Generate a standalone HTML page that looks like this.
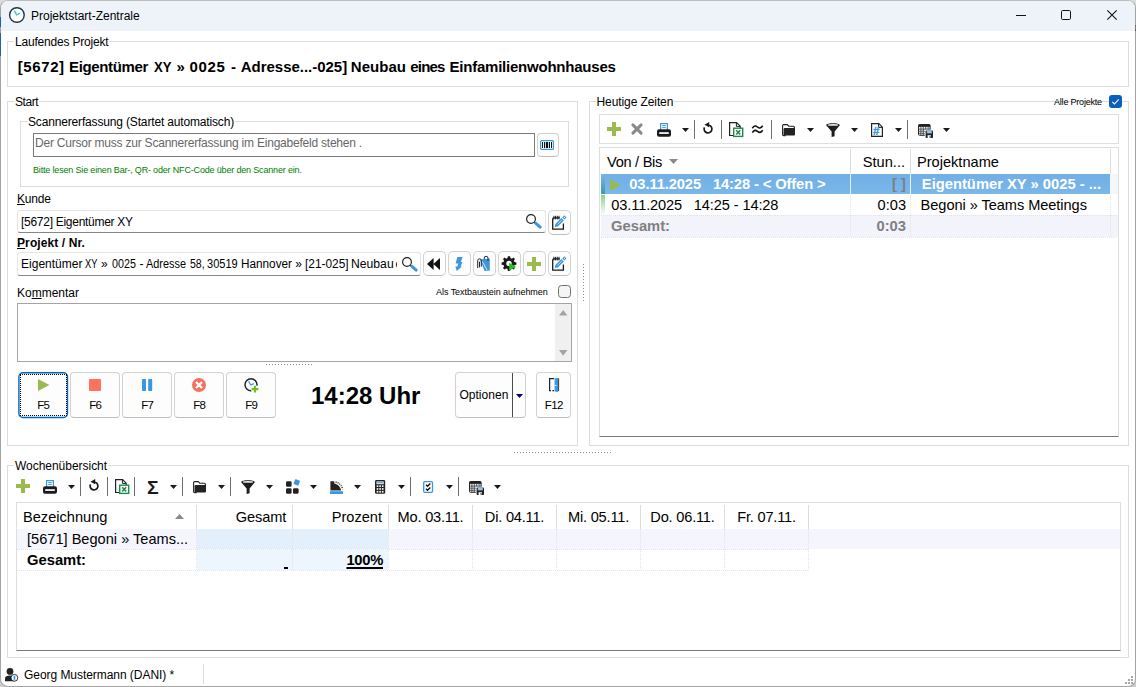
<!DOCTYPE html>
<html lang="de">
<head>
<meta charset="utf-8">
<title>Projektstart-Zentrale</title>
<style>
*{box-sizing:border-box;margin:0;padding:0}
html,body{width:1136px;height:687px;overflow:hidden;background:#fff}
body{position:relative;font-family:"Liberation Sans",sans-serif;font-size:12px;color:#000;line-height:16px}
.a{position:absolute;white-space:pre}
.t{position:absolute;white-space:pre;line-height:16px;font-size:12px;letter-spacing:-0.17px}
.b{font-weight:bold}
.grp{position:absolute;border:1px solid #dcdcdc}
.lbl{position:absolute;background:#fff;padding:0 1px;line-height:16px;white-space:pre;letter-spacing:-0.17px}
.btn{position:absolute;border:1px solid #d2d2d2;border-bottom-color:#bebebe;border-radius:4px;background:#fdfdfd}
.inp{position:absolute;border:1px solid #e5e5e5;border-bottom:1px solid #868686;border-radius:3px;background:#fff}
.g{font-size:14.6px;line-height:20px;position:absolute;white-space:pre}
.r{text-align:right}
.c{text-align:center}
svg{position:absolute;overflow:visible}
u{text-decoration:underline}
.g.b{font-size:14.75px}
.u2{text-decoration:underline;text-decoration-thickness:2px;text-underline-offset:1.5px}
</style>
</head>
<body>
<div class="a" style="left:0;top:0;width:1136px;height:687px;background:linear-gradient(180deg,#dcdcdc 0 9px,#fff 9px 678px,#cdcdcd 678px)"></div>
<div class="a" style="left:0;top:0;width:1136px;height:687px;background:#fff;border:1px solid #a3a3a3;border-top-color:#bdbdbd;border-radius:8px"></div>
<div class="a" style="left:0;top:17px;width:1px;height:39px;background:linear-gradient(180deg,#1c64a6 0 10px,#b09aa8 10px 16px,#1c64a6 16px)"></div>
<div class="a" style="left:1135px;top:25px;width:1px;height:6px;background:linear-gradient(180deg,#3a5fb0,#c07a20,#3a3a90)"></div>
<div class="a" style="left:1px;top:1px;width:1134px;height:30px;background:#eef3fa;border-radius:7px 7px 0 0"></div>
<svg style="left:8px;top:6px" width="18" height="18" viewBox="0 0 18 18"><circle cx="8.9" cy="9" r="7.3" fill="#fff" stroke="#1f3640" stroke-width="1.4"/><path d="M6.4 4.6L8.6 8.9L12.2 7.2" fill="none" stroke="#4fc0c0" stroke-width="1.4"/></svg>
<div class="t" style="left:31px;top:8px;letter-spacing:0">Projektstart-Zentrale</div>
<svg style="left:1016px;top:10px" width="11" height="11" viewBox="0 0 11 11"><path d="M0 5.5H10" stroke="#111" stroke-width="1"/></svg>
<svg style="left:1061px;top:10px" width="11" height="11" viewBox="0 0 11 11"><rect x="0.5" y="0.5" width="9" height="9" rx="1.2" fill="none" stroke="#111" stroke-width="1"/></svg>
<svg style="left:1107px;top:10px" width="11" height="11" viewBox="0 0 11 11"><path d="M0.3 0.3L9.7 9.7M9.7 0.3L0.3 9.7" stroke="#111" stroke-width="1.1"/></svg>
<div class="grp" style="left:7px;top:41px;width:1122px;height:46px"></div>
<div class="lbl" style="left:14px;top:34px;letter-spacing:-0.2px">Laufendes Projekt</div>
<div class="a b" style="left:0;top:57px;font-size:15px;line-height:20px"><span class="a" style="left:17.75px;top:0;letter-spacing:0.6px">[5672] </span><span class="a" style="left:69px;top:0;letter-spacing:-0.36px">Eigentümer </span><span class="a" style="left:153.75px;top:0;transform:scaleX(0.875);transform-origin:0 0">XY </span><span class="a" style="left:176.5px;top:0;">» </span><span class="a" style="left:189.5px;top:0;letter-spacing:0.667px">0025 </span><span class="a" style="left:231px;top:0;">- </span><span class="a" style="left:240.75px;top:0;letter-spacing:-0.02px">Adresse...-025] </span><span class="a" style="left:350.75px;top:0;letter-spacing:0.05px">Neubau </span><span class="a" style="left:410.25px;top:0;letter-spacing:-0.81px">eines </span><span class="a" style="left:449.5px;top:0;letter-spacing:-0.225px">Einfamilienwohnhauses</span></div>
<div class="grp" style="left:7px;top:101px;width:571px;height:345px"></div>
<div class="lbl" style="left:14px;top:94px;letter-spacing:-0.42px">Start</div>
<div class="grp" style="left:20px;top:121px;width:549px;height:66px"></div>
<div class="lbl" style="left:27px;top:114px;letter-spacing:-0.16px">Scannererfassung (Startet automatisch)</div>
<div class="a" style="left:33px;top:133px;width:502px;height:24px;border:1px solid #7a7a7a;background:#fff"></div>
<div class="t" style="left:35px;top:134.6px;color:#676767;letter-spacing:-0.22px">Der Cursor muss zur Scannererfassung im Eingabefeld stehen .</div>
<div class="btn" style="left:537px;top:133px;width:22px;height:24px"></div>
<svg style="left:540px;top:140px" width="14" height="10" viewBox="0 0 14 10"><rect x="0.6" y="0.6" width="12.8" height="8.8" rx="1" fill="#fff" stroke="#3a96dd" stroke-width="1.2"/><path d="M2 2h1v6h-1zM4 2h1v6h-1zM5.8 2h2.4v6h-2.4zM9 2h1v6h-1zM11 2h1v6h-1z" fill="#111"/></svg>
<div class="t" style="left:33px;top:162px;font-size:9px;color:#008000;letter-spacing:-0.17px">Bitte lesen Sie einen Bar-, QR- oder NFC-Code über den Scanner ein.</div>
<div class="t" style="left:17px;top:191px;letter-spacing:-0.19px"><u>K</u>unde</div>
<div class="inp" style="left:17px;top:210px;width:529px;height:23px"></div>
<div class="t" style="left:21px;top:214px;letter-spacing:-0.28px">[5672] Eigentümer XY</div>
<svg style="left:525.3px;top:213.2px" width="17" height="17" viewBox="0 0 17 17"><circle cx="6" cy="6" r="4.4" fill="none" stroke="#222" stroke-width="1.2"/><path d="M9.2 9.2L11 10.8" stroke="#222" stroke-width="1.4"/><path d="M10.9 10.3L15.2 14.1" stroke="#3a96dd" stroke-width="3" stroke-linecap="round"/></svg>
<div class="btn" style="left:548px;top:210px;width:23px;height:25px;border-radius:5px"></div>
<svg style="left:552px;top:215px" width="15" height="15" viewBox="0 0 15 15"><path d="M7.6 2.9H1.9a1.2 1.2 0 0 0-1.2 1.2V14.1H11.4V8.6" fill="none" stroke="#1a1a1a" stroke-width="1.3"/><path d="M1.9 0.8v3.6M3.6 0.8v3.6M5.3 0.8v3.6M7 0.8v3.6" stroke="#1a1a1a" stroke-width="1"/><path d="M2.7 12.1L3.4 9L9.4 3L11.8 5.4L5.8 11.4z" fill="#3a96dd"/><path d="M10.24 2.44L12.34 0.34L14.46 2.46L12.36 4.56z" fill="#3a96dd"/><path d="M5.6 9.2L9.8 5" stroke="#fff" stroke-width="0.7"/><circle cx="12.4" cy="2.4" r="0.55" fill="#fff"/></svg>
<div class="t b" style="left:17px;top:235px;letter-spacing:0.1px"><u>P</u>rojekt / Nr.</div>
<div class="inp" style="left:17px;top:252px;width:404px;height:24px"></div>
<div class="t" style="left:0;top:255.5px;width:397.2px;height:16px;overflow:hidden;letter-spacing:0"><span class="a" style="left:20.75px;top:0;transform:scaleX(1.002);transform-origin:0 0">Eigentümer </span><span class="a" style="left:85.0px;top:0;transform:scaleX(0.775);transform-origin:0 0">XY </span><span class="a" style="left:101.1px;top:0;transform:scaleX(1.0);transform-origin:0 0">» </span><span class="a" style="left:111.75px;top:0;transform:scaleX(0.894);transform-origin:0 0">0025 </span><span class="a" style="left:139.4px;top:0;transform:scaleX(1.0);transform-origin:0 0">- </span><span class="a" style="left:146.25px;top:0;transform:scaleX(0.909);transform-origin:0 0">Adresse </span><span class="a" style="left:189.73px;top:0;transform:scaleX(0.873);transform-origin:0 0">58, </span><span class="a" style="left:207.18px;top:0;transform:scaleX(0.919);transform-origin:0 0">30519 </span><span class="a" style="left:241.12px;top:0;transform:scaleX(0.98);transform-origin:0 0">Hannover </span><span class="a" style="left:295.25px;top:0;transform:scaleX(1.0);transform-origin:0 0">» </span><span class="a" style="left:304.91px;top:0;transform:scaleX(0.99);transform-origin:0 0">[21-025] </span><span class="a" style="left:350.88px;top:0;transform:scaleX(1.015);transform-origin:0 0">Neubau </span><span class="a" style="left:395.5px;top:0;transform:scaleX(1.0);transform-origin:0 0">eines </span></div>
<svg style="left:400.6px;top:255.7px" width="17" height="17" viewBox="0 0 17 17"><circle cx="6" cy="6" r="4.4" fill="none" stroke="#222" stroke-width="1.2"/><path d="M9.2 9.2L11 10.8" stroke="#222" stroke-width="1.4"/><path d="M10.9 10.3L15.2 14.1" stroke="#3a96dd" stroke-width="3" stroke-linecap="round"/></svg>
<div class="btn" style="left:423px;top:251px;width:23px;height:25px;border-radius:5px"></div>
<div class="btn" style="left:448px;top:251px;width:23px;height:25px;border-radius:5px"></div>
<div class="btn" style="left:473px;top:251px;width:23px;height:25px;border-radius:5px"></div>
<div class="btn" style="left:498px;top:251px;width:23px;height:25px;border-radius:5px"></div>
<div class="btn" style="left:523px;top:251px;width:23px;height:25px;border-radius:5px"></div>
<div class="btn" style="left:548px;top:251px;width:23px;height:25px;border-radius:5px"></div>
<svg style="left:427px;top:258px" width="13" height="12" viewBox="0 0 13 12"><path d="M6.6 0v12L0 6zM13 0v12L6.4 6z" fill="#111"/></svg>
<svg style="left:454.5px;top:257px" width="8" height="14" viewBox="0 0 8 14"><path d="M2.4 0H7.6L5.8 5H7.4L5.6 9.4H7L1.7 14L0.4 9.4H2.4L3.3 6.6H0.6z" fill="#3a96dd"/></svg>
<svg style="left:477px;top:256px" width="14" height="15" viewBox="0 0 14 15"><path d="M3 3.6L12.8 2.4V14.4L7.6 15z" fill="#3a96dd"/><path d="M5.2 5.4l4.8 8.6" stroke="#e8f2fb" stroke-width="0.9"/><path d="M0.7 12V4.6a1.8 1.8 0 0 1 3.6 0V10.6M2.5 11.4V5.6" fill="none" stroke="#222" stroke-width="1"/><path d="M7.2 3.4V2.2a1.9 1.9 0 0 1 3.8 0V5" fill="none" stroke="#222" stroke-width="1"/></svg>
<svg style="left:502px;top:256px" width="15" height="15" viewBox="0 0 15 15"><path d="M5.9 0.2h2.2l0.4 1.9l1.3 0.6l1.7-1.1l1.5 1.5l-1.1 1.7l0.6 1.3l1.9 0.4v2.2l-1.9 0.4l-0.6 1.3l1.1 1.7l-1.5 1.5l-1.7-1.1l-1.3 0.6l-0.4 1.9h-2.2l-0.4-1.9l-1.3-0.6l-1.7 1.1l-1.5-1.5l1.1-1.7l-0.6-1.3l-1.9-0.4v-2.2l1.9-0.4l0.6-1.3l-1.1-1.7l1.5-1.5l1.7 1.1l1.3-0.6z" fill="#1a1a1a"/><circle cx="7" cy="7.4" r="2.7" fill="#fdfdfd"/><path d="M7.2 6.8v8l6.9-4z" fill="#22c422"/></svg>
<svg style="left:527px;top:257px" width="14" height="14" viewBox="0 0 14 14"><path d="M5 0h4v5h5v4h-5v5h-4v-5h-5v-4h5z" fill="#9aba50"/></svg>
<svg style="left:552px;top:256px" width="15" height="15" viewBox="0 0 15 15"><path d="M7.6 2.9H1.9a1.2 1.2 0 0 0-1.2 1.2V14.1H11.4V8.6" fill="none" stroke="#1a1a1a" stroke-width="1.3"/><path d="M1.9 0.8v3.6M3.6 0.8v3.6M5.3 0.8v3.6M7 0.8v3.6" stroke="#1a1a1a" stroke-width="1"/><path d="M2.7 12.1L3.4 9L9.4 3L11.8 5.4L5.8 11.4z" fill="#3a96dd"/><path d="M10.24 2.44L12.34 0.34L14.46 2.46L12.36 4.56z" fill="#3a96dd"/><path d="M5.6 9.2L9.8 5" stroke="#fff" stroke-width="0.7"/><circle cx="12.4" cy="2.4" r="0.55" fill="#fff"/></svg>
<div class="t" style="left:17px;top:285px;letter-spacing:0">Ko<u>m</u>mentar</div>
<div class="t" style="left:436px;top:283.5px;font-size:9px;letter-spacing:-0.045px">Als Textbaustein aufnehmen</div>
<div class="a" style="left:558px;top:285px;width:13px;height:13px;border:1px solid #707070;border-radius:3.5px;background:#f5f5f5"></div>
<div class="a" style="left:17px;top:303px;width:555px;height:59px;border:1px solid #a4a4a8;background:#fff"></div>
<div class="a" style="left:555px;top:304px;width:16px;height:57px;background:#f0f0f0"></div>
<svg style="left:559px;top:310px" width="8.4" height="5.6" viewBox="0 0 8.4 5.6"><path d="M4.2 0L8.4 5.6H0z" fill="#a3a3a3"/></svg>
<svg style="left:559px;top:350.2px" width="8.4" height="5.8" viewBox="0 0 8.4 5.8"><path d="M0 0H8.4L4.2 5.8z" fill="#a3a3a3"/></svg>
<div class="a" style="left:266px;top:364px;width:46px;height:1px;background:repeating-linear-gradient(90deg,#8c8c8c 0 1px,transparent 1px 3px)"></div>
<div class="a" style="left:583px;top:264px;width:1px;height:37px;background:repeating-linear-gradient(180deg,#8c8c8c 0 1px,transparent 1px 3px)"></div>
<div class="a" style="left:514px;top:452px;width:97px;height:1px;background:repeating-linear-gradient(90deg,#8c8c8c 0 1px,transparent 1px 3px)"></div>
<svg style="left:18px;top:372px" width="50" height="46" viewBox="0 0 50 46"><rect x="0.9" y="0.7" width="48.6" height="44.8" rx="4" fill="#fdfdfd" stroke="#0067c0" stroke-width="1.4"/></svg>
<div class="t c" style="left:18px;top:397px;width:50.6px;font-size:11.5px;letter-spacing:-0.6px">F5</div>
<div class="btn" style="left:70px;top:372px;width:50px;height:46px"></div>
<div class="t c" style="left:70px;top:397px;width:50.6px;font-size:11.5px;letter-spacing:-0.6px">F6</div>
<div class="btn" style="left:122px;top:372px;width:50px;height:46px"></div>
<div class="t c" style="left:122px;top:397px;width:50.6px;font-size:11.5px;letter-spacing:-0.6px">F7</div>
<div class="btn" style="left:174px;top:372px;width:50px;height:46px"></div>
<div class="t c" style="left:174px;top:397px;width:50.6px;font-size:11.5px;letter-spacing:-0.6px">F8</div>
<div class="btn" style="left:226px;top:372px;width:50px;height:46px"></div>
<div class="t c" style="left:226px;top:397px;width:50.6px;font-size:11.5px;letter-spacing:-0.6px">F9</div>
<div class="a" style="left:20px;top:374px;width:47px;height:42px;border:1px dotted #000"></div>
<svg style="left:38px;top:379px" width="12" height="12" viewBox="0 0 12 12"><path d="M0 0L11.5 6L0 12z" fill="#9aba50"/></svg>
<svg style="left:89px;top:379px" width="12" height="12" viewBox="0 0 12 12"><rect width="12" height="12" rx="0.8" fill="#ff725c"/></svg>
<svg style="left:142px;top:379px" width="11" height="12" viewBox="0 0 11 12"><rect x="0" width="4" height="12" rx="0.8" fill="#3a96dd"/><rect x="6.2" width="4" height="12" rx="0.8" fill="#3a96dd"/></svg>
<svg style="left:192px;top:378px" width="14" height="14" viewBox="0 0 14 14"><circle cx="7" cy="7" r="7" fill="#f4705f"/><path d="M4 4l6 6M10 4l-6 6" stroke="#fff" stroke-width="2.2"/></svg>
<svg style="left:244px;top:378px" width="15" height="15" viewBox="0 0 15 15"><circle cx="7" cy="6.8" r="6" fill="#fff" stroke="#222" stroke-width="1.5"/><path d="M4.6 3.4L6.8 7L9.8 5.6" fill="none" stroke="#3a96dd" stroke-width="1.2"/><circle cx="11" cy="11.2" r="4" fill="#fff"/><path d="M9.9 7.8h2.2v2.3h2.3v2.2h-2.3v2.3h-2.2v-2.3h-2.3v-2.2h2.3z" fill="#6cc024"/></svg>
<div class="a b" style="left:311px;top:380px;font-size:24px;line-height:32px">14:28 Uhr</div>
<div class="btn" style="left:455px;top:372px;width:71px;height:46px"></div>
<div class="a" style="left:512px;top:373px;width:1px;height:44px;background:#4c4c4c"></div>
<svg style="left:516px;top:393.5px" width="7" height="4" viewBox="0 0 7 4"><path d="M0 0h7l-3.5 4z" fill="#00007a"/></svg>
<div class="t" style="left:459.4px;top:387px;letter-spacing:0.04px">Optionen</div>
<div class="btn" style="left:536px;top:372px;width:35px;height:46px"></div>
<div class="t c" style="left:536px;top:397px;width:35.6px;font-size:11.5px;letter-spacing:-0.6px">F12</div>
<svg style="left:549px;top:378px" width="10" height="14" viewBox="0 0 10 14"><path d="M5 0.6H0.6V12.6H2M3.4 12.6H5" fill="none" stroke="#222" stroke-width="1.2"/><path d="M5.6 0.2L9.2 0V14L5.6 13.4z" fill="#3a96dd"/><path d="M9.6 0.4V13" stroke="#222" stroke-width="0.9"/><circle cx="6.8" cy="7.4" r="0.7" fill="#fff"/></svg>
<div class="grp" style="left:589px;top:101px;width:540px;height:345px"></div>
<div class="lbl" style="left:595.5px;top:94px;letter-spacing:-0.09px">Heutige Zeiten</div>
<div class="t" style="left:1054px;top:93.5px;font-size:9px;letter-spacing:-0.2px">Alle Projekte</div>
<svg style="left:1109px;top:95px" width="13" height="13" viewBox="0 0 13 13"><rect width="13" height="13" rx="3" fill="#0a5fbd"/><path d="M3.3 6.8l2.2 2.2l4.2-4.6" fill="none" stroke="#fff" stroke-width="1.1"/></svg>
<div class="a" style="left:599px;top:114px;width:520px;height:30px;border:1px solid #dedede;background:#fff"></div>
<svg style="left:607px;top:122px" width="14" height="14" viewBox="0 0 14 14"><path d="M5 0h4v5h5v4h-5v5h-4v-5h-5v-4h5z" fill="#9aba50"/></svg>
<svg style="left:631px;top:123px" width="12" height="12" viewBox="0 0 12 12"><path d="M1.9 1.9L10.1 10.1M10.1 1.9L1.9 10.1" stroke="#8a8a8a" stroke-width="3" stroke-linecap="round"/></svg>
<svg style="left:657px;top:122.6px" width="14" height="14" viewBox="0 0 14 14"><rect x="3.6" y="0.6" width="6.8" height="7" fill="#fff" stroke="#3a96dd" stroke-width="1.2"/><path d="M5.2 2.6h3.6M5.2 4.6h3.6" stroke="#3a96dd" stroke-width="1"/><rect x="0" y="6.2" width="14" height="7.6" rx="2" fill="#1c1c1c"/><rect x="2.2" y="9.2" width="9.6" height="1.7" fill="#fff"/></svg>
<svg style="left:682px;top:128px" width="7" height="4" viewBox="0 0 7 4"><path d="M0 0h7l-3.5 4z" fill="#1a1a1a"/></svg>
<div class="a" style="left:694px;top:120px;width:1px;height:19px;background:#6e6e6e"></div>
<svg style="left:700.75px;top:121.25px" width="14" height="15" viewBox="0 0 14 15"><path d="M8 4.23A3.9 3.9 0 1 1 3.5 6.3" fill="none" stroke="#1a1a1a" stroke-width="1.7"/><path d="M8.2 0.9L3.5 3.7L8.2 6.3z" fill="#1a1a1a"/></svg>
<div class="a" style="left:721px;top:120px;width:1px;height:19px;background:#6e6e6e"></div>
<svg style="left:729px;top:122px" width="15" height="15" viewBox="0 0 15 15"><path d="M0.6 0.6h7l3.6 3.6v9.3h-10.6z" fill="#fff" stroke="#222" stroke-width="1.2"/><path d="M7.4 0.8v3.6h3.6" fill="none" stroke="#222" stroke-width="1"/><rect x="4.7" y="6.2" width="9" height="8.2" fill="#fff" stroke="#1f8a4c" stroke-width="1.4"/><path d="M7.2 8.3l4 4.2M11.2 8.3l-4 4.2" stroke="#1f8a4c" stroke-width="1.6"/></svg>
<svg style="left:752px;top:124.5px" width="11" height="9" viewBox="0 0 11 9"><path d="M0.3 3.2C2.3 0.2 3.8 0.6 5.5 2S8.8 3.6 10.7 0.8M0.3 7.6C2.3 4.6 3.8 5 5.5 6.4S8.8 8 10.7 5.2" fill="none" stroke="#111" stroke-width="1.6"/></svg>
<div class="a" style="left:771px;top:120px;width:1px;height:19px;background:#6e6e6e"></div>
<svg style="left:782px;top:124px" width="13" height="12" viewBox="0 0 13 12"><path d="M0.6 9.5V1.6a1 1 0 0 1 1-1h3.6l1.6 1.6h4.6a1 1 0 0 1 1 1V5" fill="#fff" stroke="#222" stroke-width="1.1"/><rect x="1.6" y="4" width="11.4" height="7.6" rx="1" fill="#222"/><path d="M0.6 9v1.6a1 1 0 0 0 1 1h2" fill="none" stroke="#222" stroke-width="1.1"/></svg>
<svg style="left:807px;top:128px" width="7" height="4" viewBox="0 0 7 4"><path d="M0 0h7l-3.5 4z" fill="#1a1a1a"/></svg>
<svg style="left:826px;top:123px" width="14" height="14" viewBox="0 0 14 14"><path d="M0.2 2.2C0.2 -0.4 13.8 -0.4 13.8 2.2L8.6 8.4V13.2L5.6 14V8.4z" fill="#1e1e1e"/><ellipse cx="7" cy="1.9" rx="5.2" ry="0.9" fill="#e8e8e8"/></svg>
<svg style="left:851px;top:128px" width="7" height="4" viewBox="0 0 7 4"><path d="M0 0h7l-3.5 4z" fill="#1a1a1a"/></svg>
<svg style="left:871px;top:123px" width="12" height="14" viewBox="0 0 12 14"><path d="M0.6 0.6h7.2l3.6 3.6v9.2h-10.8z" fill="#fff" stroke="#222" stroke-width="1.2"/><path d="M7.6 0.8v3.6h3.6" fill="none" stroke="#222" stroke-width="1"/><text x="1.9" y="12" font-family="Liberation Sans, sans-serif" font-size="11.5" font-weight="bold" fill="#3a96dd" stroke="#3a96dd" stroke-width="0.4">#</text></svg>
<svg style="left:895px;top:128px" width="7" height="4" viewBox="0 0 7 4"><path d="M0 0h7l-3.5 4z" fill="#1a1a1a"/></svg>
<div class="a" style="left:907px;top:120px;width:1px;height:19px;background:#6e6e6e"></div>
<svg style="left:918px;top:124px" width="15" height="14" viewBox="0 0 15 14"><rect x="0.5" y="0.5" width="11.6" height="10.8" rx="1" fill="#f4f4f4" stroke="#222" stroke-width="1"/><rect x="0.5" y="0.5" width="11.6" height="2.4" fill="#222"/><path d="M2.9 2.6v8.4" stroke="#3a3a3a" stroke-width="0.8"/><path d="M5.3 2.6v8.4" stroke="#3a3a3a" stroke-width="0.8"/><path d="M7.699999999999999 2.6v8.4" stroke="#3a3a3a" stroke-width="0.8"/><path d="M10.1 2.6v8.4" stroke="#3a3a3a" stroke-width="0.8"/><path d="M0.5 5.1h11.4" stroke="#3a3a3a" stroke-width="0.8"/><path d="M0.5 7.2h11.4" stroke="#3a3a3a" stroke-width="0.8"/><path d="M0.5 9.3h11.4" stroke="#3a3a3a" stroke-width="0.8"/><rect x="6.8" y="5.8" width="8.2" height="8.2" fill="#fff"/><rect x="7.6" y="6.4" width="7.4" height="7.6" rx="0.8" fill="#222"/><rect x="8.8" y="6.4" width="5" height="3" fill="#8cc4f0"/><rect x="9.6" y="11.2" width="3.4" height="2.8" fill="#fff"/><rect x="11.6" y="11.8" width="1" height="2.2" fill="#222"/></svg>
<svg style="left:943px;top:128px" width="7" height="4" viewBox="0 0 7 4"><path d="M0 0h7l-3.5 4z" fill="#1a1a1a"/></svg>
<div class="a" style="left:599px;top:147px;width:520px;height:290px;border:1px solid #dedede;border-bottom-color:#7a7a7a;background:#fff"></div>
<div class="a" style="left:850px;top:149px;width:1px;height:25px;background:#dcdcdc"></div>
<div class="a" style="left:910px;top:149px;width:1px;height:25px;background:#dcdcdc"></div>
<div class="a" style="left:1110px;top:149px;width:1px;height:25px;background:#dcdcdc"></div>
<div class="g" style="left:607px;top:152px;letter-spacing:-0.28px">Von / Bis</div>
<svg style="left:669px;top:159px" width="9" height="5" viewBox="0 0 9 5"><path d="M0 0h9l-4.5 5z" fill="#8a8a8a"/></svg>
<div class="g r" style="left:851px;top:152px;width:54px">Stun...</div>
<div class="g" style="left:917px;top:152px">Projektname</div>
<div class="a" style="left:601px;top:174px;width:509px;height:20px;background:linear-gradient(#70afe6,#7bb7e8)"></div>
<div class="a" style="left:601px;top:174px;width:4px;height:20px;background:linear-gradient(#7db6de,#3f9aa6)"></div>
<div class="a" style="left:850px;top:174px;width:1px;height:20px;background:#e8f1fa"></div>
<div class="a" style="left:910px;top:174px;width:1px;height:20px;background:#e8f1fa"></div>
<svg style="left:610px;top:179px" width="11" height="12" viewBox="0 0 11 12"><path d="M0 0L11 6L0 12z" fill="#9aba50"/></svg>
<div class="g b" style="left:629.3px;top:174px;color:#fff;letter-spacing:-0.13px">03.11.2025   14:28 - &lt; Offen &gt;</div>
<div class="g b r" style="left:851px;top:174px;width:55px;color:#7f7f7f">[ ]</div>
<div class="g b" style="left:921.8px;top:174px;color:#fff">Eigentümer XY » 0025 - ...</div>
<div class="a" style="left:601px;top:195px;width:4px;height:20px;background:linear-gradient(#86d586,#fff)"></div>
<div class="g" style="left:611.3px;top:195px;letter-spacing:-0.12px">03.11.2025   14:25 - 14:28</div>
<div class="g r" style="left:851px;top:195px;width:55px">0:03</div>
<div class="g" style="left:920.6px;top:195px;letter-spacing:-0.06px">Begoni » Teams Meetings</div>
<div class="a" style="left:601px;top:215px;width:517px;height:22px;background:#f3f3fb"></div>
<div class="g b" style="left:611px;top:216px;color:#7f7f7f">Gesamt:</div>
<div class="g b r" style="left:851px;top:216px;width:55px;color:#7f7f7f">0:03</div>
<div class="a" style="left:850px;top:195px;width:1px;height:42px;background:repeating-linear-gradient(180deg,#e2e2ea 0 1px,transparent 1px 2px)"></div>
<div class="a" style="left:910px;top:195px;width:1px;height:42px;background:repeating-linear-gradient(180deg,#e2e2ea 0 1px,transparent 1px 2px)"></div>
<div class="a" style="left:1110px;top:195px;width:1px;height:42px;background:repeating-linear-gradient(180deg,#e2e2ea 0 1px,transparent 1px 2px)"></div>
<div class="a" style="left:601px;top:215px;width:516px;height:1px;background:repeating-linear-gradient(90deg,#e2e2ea 0 1px,transparent 1px 2px)"></div>
<div class="a" style="left:601px;top:237px;width:516px;height:1px;background:repeating-linear-gradient(90deg,#e2e2ea 0 1px,transparent 1px 2px)"></div>
<div class="a" style="left:1110px;top:174px;width:8px;height:20px;background:#f5f5fc"></div>
<div class="grp" style="left:7px;top:465px;width:1122px;height:193px"></div>
<div class="lbl" style="left:14px;top:458px;letter-spacing:-0.03px">Wochenübersicht</div>
<svg style="left:16px;top:479px" width="14" height="14" viewBox="0 0 14 14"><path d="M5 0h4v5h5v4h-5v5h-4v-5h-5v-4h5z" fill="#9aba50"/></svg>
<svg style="left:43px;top:479.5px" width="14" height="14" viewBox="0 0 14 14"><rect x="3.6" y="0.6" width="6.8" height="7" fill="#fff" stroke="#3a96dd" stroke-width="1.2"/><path d="M5.2 2.6h3.6M5.2 4.6h3.6" stroke="#3a96dd" stroke-width="1"/><rect x="0" y="6.2" width="14" height="7.6" rx="2" fill="#1c1c1c"/><rect x="2.2" y="9.2" width="9.6" height="1.7" fill="#fff"/></svg>
<svg style="left:68px;top:485px" width="7" height="4" viewBox="0 0 7 4"><path d="M0 0h7l-3.5 4z" fill="#1a1a1a"/></svg>
<div class="a" style="left:80px;top:477px;width:1px;height:19px;background:#6e6e6e"></div>
<svg style="left:86.9px;top:478.2px" width="14" height="15" viewBox="0 0 14 15"><path d="M8 4.23A3.9 3.9 0 1 1 3.5 6.3" fill="none" stroke="#1a1a1a" stroke-width="1.7"/><path d="M8.2 0.9L3.5 3.7L8.2 6.3z" fill="#1a1a1a"/></svg>
<div class="a" style="left:107px;top:477px;width:1px;height:19px;background:#6e6e6e"></div>
<svg style="left:115px;top:479px" width="15" height="15" viewBox="0 0 15 15"><path d="M0.6 0.6h7l3.6 3.6v9.3h-10.6z" fill="#fff" stroke="#222" stroke-width="1.2"/><path d="M7.4 0.8v3.6h3.6" fill="none" stroke="#222" stroke-width="1"/><rect x="4.7" y="6.2" width="9" height="8.2" fill="#fff" stroke="#1f8a4c" stroke-width="1.4"/><path d="M7.2 8.3l4 4.2M11.2 8.3l-4 4.2" stroke="#1f8a4c" stroke-width="1.6"/></svg>
<div class="a" style="left:134px;top:477px;width:1px;height:19px;background:#6e6e6e"></div>
<div class="a b" style="left:147px;top:478.6px;font-size:18px;line-height:18px;color:#1a1a1a;transform:scaleX(1.08);transform-origin:0 0">Σ</div>
<svg style="left:170px;top:485px" width="7" height="4" viewBox="0 0 7 4"><path d="M0 0h7l-3.5 4z" fill="#1a1a1a"/></svg>
<div class="a" style="left:182px;top:477px;width:1px;height:19px;background:#6e6e6e"></div>
<svg style="left:193px;top:481px" width="13" height="12" viewBox="0 0 13 12"><path d="M0.6 9.5V1.6a1 1 0 0 1 1-1h3.6l1.6 1.6h4.6a1 1 0 0 1 1 1V5" fill="#fff" stroke="#222" stroke-width="1.1"/><rect x="1.6" y="4" width="11.4" height="7.6" rx="1" fill="#222"/><path d="M0.6 9v1.6a1 1 0 0 0 1 1h2" fill="none" stroke="#222" stroke-width="1.1"/></svg>
<svg style="left:218px;top:485px" width="7" height="4" viewBox="0 0 7 4"><path d="M0 0h7l-3.5 4z" fill="#1a1a1a"/></svg>
<div class="a" style="left:230px;top:477px;width:1px;height:19px;background:#6e6e6e"></div>
<svg style="left:241px;top:480px" width="14" height="14" viewBox="0 0 14 14"><path d="M0.2 2.2C0.2 -0.4 13.8 -0.4 13.8 2.2L8.6 8.4V13.2L5.6 14V8.4z" fill="#1e1e1e"/><ellipse cx="7" cy="1.9" rx="5.2" ry="0.9" fill="#e8e8e8"/></svg>
<svg style="left:266px;top:485px" width="7" height="4" viewBox="0 0 7 4"><path d="M0 0h7l-3.5 4z" fill="#1a1a1a"/></svg>
<svg style="left:286px;top:479px" width="14" height="15" viewBox="0 0 14 15"><rect x="0" y="2.2" width="5.6" height="5.6" rx="1.3" fill="#222"/><rect x="0" y="9.2" width="5.6" height="5.6" rx="1.3" fill="#222"/><rect x="7" y="9.2" width="5.6" height="5.6" rx="1.3" fill="#222"/><rect x="8.2" y="0.8" width="5.2" height="5.2" rx="0.8" fill="#3a96dd" transform="rotate(20 10.8 3.4)"/></svg>
<svg style="left:310px;top:485px" width="7" height="4" viewBox="0 0 7 4"><path d="M0 0h7l-3.5 4z" fill="#1a1a1a"/></svg>
<svg style="left:330px;top:481px" width="13" height="13" viewBox="0 0 13 13"><path d="M0.4 9.6V0.2H4.3V2.4C7.2 2.8 10.2 5 11.2 9.6z" fill="#222"/><path d="M5.6 1C9 1.6 12 4.6 12.6 8.4" fill="none" stroke="#222" stroke-width="1.3" stroke-dasharray="1.1 1"/><rect x="0" y="10.2" width="13" height="2.8" fill="#3a96dd"/></svg>
<svg style="left:354px;top:485px" width="7" height="4" viewBox="0 0 7 4"><path d="M0 0h7l-3.5 4z" fill="#1a1a1a"/></svg>
<svg style="left:375px;top:480px" width="10" height="14" viewBox="0 0 10 14"><rect x="0" y="0" width="10.2" height="13.8" rx="1.4" fill="#222"/><rect x="1.5" y="1.4" width="7.2" height="2.8" fill="#fff"/><rect x="2.2" y="2.2" width="5.8" height="1.1" fill="#3a96dd"/><rect x="1.7" y="5.3" width="1.6" height="1.7" fill="#fff"/><rect x="1.7" y="8.1" width="1.6" height="1.7" fill="#fff"/><rect x="1.7" y="10.899999999999999" width="1.6" height="1.7" fill="#fff"/><rect x="4.3" y="5.3" width="1.6" height="1.7" fill="#fff"/><rect x="4.3" y="8.1" width="1.6" height="1.7" fill="#fff"/><rect x="4.3" y="10.899999999999999" width="1.6" height="1.7" fill="#fff"/><rect x="6.9" y="5.3" width="1.6" height="1.7" fill="#fff"/><rect x="6.9" y="8.1" width="1.6" height="1.7" fill="#fff"/><rect x="6.9" y="10.899999999999999" width="1.6" height="1.7" fill="#fff"/></svg>
<svg style="left:398px;top:485px" width="7" height="4" viewBox="0 0 7 4"><path d="M0 0h7l-3.5 4z" fill="#1a1a1a"/></svg>
<div class="a" style="left:410px;top:477px;width:1px;height:19px;background:#6e6e6e"></div>
<svg style="left:423px;top:481px" width="10" height="12" viewBox="0 0 10 12"><rect x="0.7" y="0.7" width="8.8" height="10.6" rx="1" fill="#fff" stroke="#3a96dd" stroke-width="1.3"/><path d="M3 3.8l1.5 1.5l2.8-2.9M3 7.8l1.5 1.5l2.8-2.9" fill="none" stroke="#111" stroke-width="1.4"/></svg>
<svg style="left:446px;top:485px" width="7" height="4" viewBox="0 0 7 4"><path d="M0 0h7l-3.5 4z" fill="#1a1a1a"/></svg>
<div class="a" style="left:458px;top:477px;width:1px;height:19px;background:#6e6e6e"></div>
<svg style="left:469px;top:481px" width="15" height="14" viewBox="0 0 15 14"><rect x="0.5" y="0.5" width="11.6" height="10.8" rx="1" fill="#f4f4f4" stroke="#222" stroke-width="1"/><rect x="0.5" y="0.5" width="11.6" height="2.4" fill="#222"/><path d="M2.9 2.6v8.4" stroke="#3a3a3a" stroke-width="0.8"/><path d="M5.3 2.6v8.4" stroke="#3a3a3a" stroke-width="0.8"/><path d="M7.699999999999999 2.6v8.4" stroke="#3a3a3a" stroke-width="0.8"/><path d="M10.1 2.6v8.4" stroke="#3a3a3a" stroke-width="0.8"/><path d="M0.5 5.1h11.4" stroke="#3a3a3a" stroke-width="0.8"/><path d="M0.5 7.2h11.4" stroke="#3a3a3a" stroke-width="0.8"/><path d="M0.5 9.3h11.4" stroke="#3a3a3a" stroke-width="0.8"/><rect x="6.8" y="5.8" width="8.2" height="8.2" fill="#fff"/><rect x="7.6" y="6.4" width="7.4" height="7.6" rx="0.8" fill="#222"/><rect x="8.8" y="6.4" width="5" height="3" fill="#8cc4f0"/><rect x="9.6" y="11.2" width="3.4" height="2.8" fill="#fff"/><rect x="11.6" y="11.8" width="1" height="2.2" fill="#222"/></svg>
<svg style="left:494px;top:485px" width="7" height="4" viewBox="0 0 7 4"><path d="M0 0h7l-3.5 4z" fill="#1a1a1a"/></svg>
<div class="a" style="left:16px;top:502px;width:1105px;height:149px;border:1px solid #dedede;border-bottom-color:#7a7a7a;background:#fff"></div>
<div class="a" style="left:196px;top:505px;width:1px;height:24px;background:#dcdcdc"></div>
<div class="a" style="left:292px;top:505px;width:1px;height:24px;background:#dcdcdc"></div>
<div class="a" style="left:388px;top:505px;width:1px;height:24px;background:#dcdcdc"></div>
<div class="a" style="left:472px;top:505px;width:1px;height:24px;background:#dcdcdc"></div>
<div class="a" style="left:556px;top:505px;width:1px;height:24px;background:#dcdcdc"></div>
<div class="a" style="left:640px;top:505px;width:1px;height:24px;background:#dcdcdc"></div>
<div class="a" style="left:724px;top:505px;width:1px;height:24px;background:#dcdcdc"></div>
<div class="a" style="left:808px;top:505px;width:1px;height:24px;background:#dcdcdc"></div>
<div class="g" style="left:23px;top:507px">Bezeichnung</div>
<svg style="left:175px;top:514px" width="9" height="5" viewBox="0 0 9 5"><path d="M0 5h9l-4.5-5z" fill="#8a8a8a"/></svg>
<div class="g r" style="left:197px;top:507px;width:89.2px;letter-spacing:-0.12px">Gesamt</div>
<div class="g r" style="left:293px;top:507px;width:89px">Prozent</div>
<div class="g c" style="left:389px;top:507px;width:83px;letter-spacing:-0.2px">Mo. 03.11.</div>
<div class="g c" style="left:473px;top:507px;width:83px;letter-spacing:-0.2px">Di. 04.11.</div>
<div class="g c" style="left:557px;top:507px;width:83px;letter-spacing:-0.2px">Mi. 05.11.</div>
<div class="g c" style="left:641px;top:507px;width:83px;letter-spacing:-0.2px">Do. 06.11.</div>
<div class="g c" style="left:725px;top:507px;width:83px;letter-spacing:-0.2px">Fr. 07.11.</div>
<div class="a" style="left:17px;top:529px;width:1103px;height:20px;background:#f5f6fd"></div>
<div class="a" style="left:197px;top:529px;width:191px;height:20px;background:#e3effb"></div>
<div class="a" style="left:197px;top:550px;width:191px;height:20px;background:#ecf6fc"></div>
<div class="g" style="left:27px;top:529px">[5671] Begoni » Teams...</div>
<div class="g b" style="left:27px;top:550px">Gesamt:</div>
<div class="g b r" style="left:293px;top:550px;width:90px"><span class="u2" style="letter-spacing:-0.3px">100%</span></div>
<div class="a" style="left:284px;top:567px;width:4px;height:2px;background:#000"></div>
<div class="a" style="left:196px;top:529px;width:1px;height:41px;background:repeating-linear-gradient(180deg,#e2e2ea 0 1px,transparent 1px 2px)"></div>
<div class="a" style="left:292px;top:529px;width:1px;height:41px;background:repeating-linear-gradient(180deg,#e2e2ea 0 1px,transparent 1px 2px)"></div>
<div class="a" style="left:388px;top:529px;width:1px;height:41px;background:repeating-linear-gradient(180deg,#e2e2ea 0 1px,transparent 1px 2px)"></div>
<div class="a" style="left:472px;top:529px;width:1px;height:41px;background:repeating-linear-gradient(180deg,#e2e2ea 0 1px,transparent 1px 2px)"></div>
<div class="a" style="left:556px;top:529px;width:1px;height:41px;background:repeating-linear-gradient(180deg,#e2e2ea 0 1px,transparent 1px 2px)"></div>
<div class="a" style="left:640px;top:529px;width:1px;height:41px;background:repeating-linear-gradient(180deg,#e2e2ea 0 1px,transparent 1px 2px)"></div>
<div class="a" style="left:724px;top:529px;width:1px;height:41px;background:repeating-linear-gradient(180deg,#e2e2ea 0 1px,transparent 1px 2px)"></div>
<div class="a" style="left:808px;top:529px;width:1px;height:41px;background:repeating-linear-gradient(180deg,#e2e2ea 0 1px,transparent 1px 2px)"></div>
<div class="a" style="left:17px;top:549px;width:792px;height:1px;background:repeating-linear-gradient(90deg,#e2e2ea 0 1px,transparent 1px 2px)"></div>
<div class="a" style="left:17px;top:570px;width:792px;height:1px;background:repeating-linear-gradient(90deg,#e2e2ea 0 1px,transparent 1px 2px)"></div>
<svg style="left:5px;top:668px" width="16" height="14" viewBox="0 0 16 14"><circle cx="5" cy="3.4" r="3.4" fill="#222"/><path d="M0 13.2V10.4C0 8.4 2 7.6 5 7.6S10 8.4 10 10.4V13.2z" fill="#222"/><circle cx="9.4" cy="9.8" r="3.4" fill="#fff" stroke="#222" stroke-width="0.9"/><rect x="8.6" y="7.8" width="1.7" height="4" fill="#3a96dd"/></svg>
<div class="t" style="left:24px;top:667px;letter-spacing:-0.05px">Georg Mustermann (DANI) *</div>
<div class="a" style="left:203px;top:664px;width:1px;height:20px;background:#d9d9d9"></div>
<div class="a" style="left:1131px;top:676px;width:2px;height:2px;background:#a8a8a8"></div>
<div class="a" style="left:1128px;top:679px;width:2px;height:2px;background:#a8a8a8"></div>
<div class="a" style="left:1131px;top:679px;width:2px;height:2px;background:#a8a8a8"></div>
<div class="a" style="left:1125px;top:682px;width:2px;height:2px;background:#a8a8a8"></div>
<div class="a" style="left:1128px;top:682px;width:2px;height:2px;background:#a8a8a8"></div>
<div class="a" style="left:1131px;top:682px;width:2px;height:2px;background:#a8a8a8"></div>
</body>
</html>
